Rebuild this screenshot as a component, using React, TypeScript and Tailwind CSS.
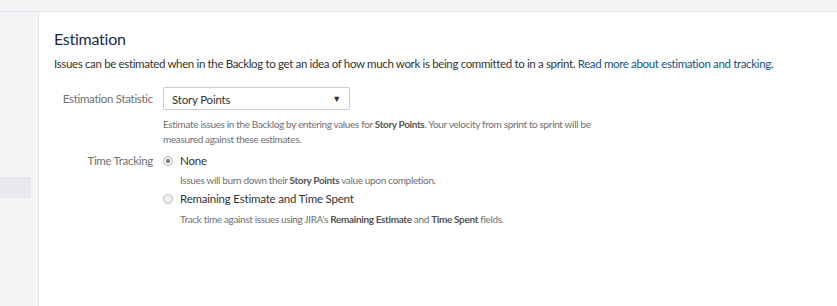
import React from "react";

function Radio({ checked }: { checked?: boolean }) {
  return (
    <span className="flex h-[10px] w-[10px] shrink-0 items-center justify-center rounded-full border border-[#b8b8b8] bg-[#f0f0f0]">
      {checked ? <span className="h-[4px] w-[4px] rounded-full bg-[#777]" /> : null}
    </span>
  );
}

export default function App() {
  return (
    <div className="flex h-[306px] w-[837px] flex-col overflow-hidden bg-white font-['Lato',sans-serif] text-[#333]">
      <div className="h-[12px] shrink-0 border-b border-[#e1e3e8] bg-[#f4f5f7]" />
      <div className="flex flex-1">
        <div className="w-[39px] shrink-0 border-r border-[#e4e6ea] bg-[#f4f5f7] pt-[165px]">
          <div className="h-[21px] w-[31px] bg-[#e8e9ec]" />
        </div>
        <div className="flex-1 pl-[15px] pt-[16px]">
          <h2 className="text-[16px] leading-[22px] tracking-[-0.25px] text-[#172b4d]">Estimation</h2>
          <p className="mt-[6px] whitespace-nowrap text-[11.5px] leading-[16px] tracking-[-0.35px] text-[#333]">
            Issues can be estimated when in the Backlog to get an idea of how much work is being committed to in a sprint.{" "}
            <a className="text-[#205081]">Read more about estimation and tracking</a>.
          </p>
          <div className="mt-[15px] flex flex-col">
            <div className="flex">
              <div className="w-[109px] shrink-0 whitespace-nowrap pr-[10px] pt-[4px] text-right text-[11.5px] leading-[16px] tracking-[-0.3px] text-[#707070]">
                Estimation Statistic
              </div>
              <div className="flex flex-col">
                <div className="flex h-[23px] w-[187px] items-center justify-between rounded-[2px] border border-[#cccccc] bg-white pl-[8px] pr-[8px] text-[11.5px] tracking-[-0.2px]">
                  <span className="pt-[2px]">Story Points</span>
                  <span className="text-[9px] text-[#333]">▼</span>
                </div>
                <p className="mt-[7px] w-[440px] text-[10px] leading-[15px] tracking-[-0.35px] text-[#707070]">
                  Estimate issues in the Backlog by entering values for <b className="font-bold text-[#555]">Story Points</b>. Your velocity from sprint to sprint will be measured against these estimates.
                </p>
              </div>
            </div>
            <div className="mt-[5px] flex">
              <div className="w-[109px] shrink-0 whitespace-nowrap pr-[10px] text-right text-[11.5px] leading-[18px] tracking-[-0.3px] text-[#707070]">
                Time Tracking
              </div>
              <div className="flex flex-col">
                <div className="flex items-center gap-[7px]">
                  <Radio checked />
                  <span className="text-[11.5px] leading-[18px] tracking-[-0.2px]">None</span>
                </div>
                <p className="mb-[2px] mt-[2px] pl-[17px] text-[10px] leading-[16px] tracking-[-0.35px] text-[#707070]">
                  Issues will burn down their <b className="font-bold text-[#555]">Story Points</b> value upon completion.
                </p>
                <div className="flex items-center gap-[7px]">
                  <Radio />
                  <span className="text-[11.5px] leading-[18px] tracking-[-0.2px]">Remaining Estimate and Time Spent</span>
                </div>
                <p className="mt-[3px] pl-[17px] text-[10px] leading-[16px] tracking-[-0.35px] text-[#707070]">
                  Track time against issues using JIRA's <b className="font-bold text-[#555]">Remaining Estimate</b> and <b className="font-bold text-[#555]">Time Spent</b> fields.
                </p>
              </div>
            </div>
          </div>
        </div>
      </div>
    </div>
  );
}
